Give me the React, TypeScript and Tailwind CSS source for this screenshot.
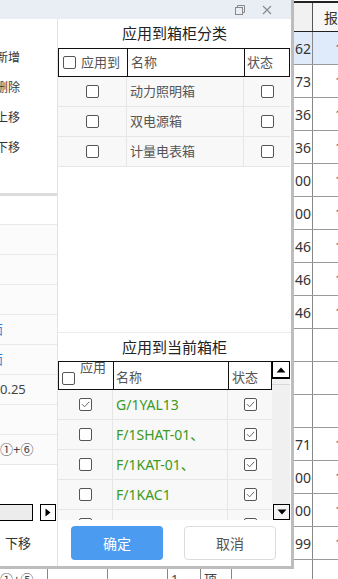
import React from "react";

const FONT = "font-['Noto_Sans','Noto_Sans_CJK_SC',sans-serif]";

function Box({ checked }: { checked?: boolean }) {
  return (
    <span className="inline-flex w-[13px] h-[13px] border border-[#555] rounded-[2px] bg-white items-center justify-center">
      {checked && (
        <svg width="9" height="9" viewBox="0 0 9 9">
          <path d="M1 4.2 L3.6 6.8 L8.2 1.8" fill="none" stroke="#666" strokeWidth="1" />
        </svg>
      )}
    </span>
  );
}

const categories = ["动力照明箱", "双电源箱", "计量电表箱"];

const current = [
  { name: "G/1YAL13", applied: true },
  { name: "F/1SHAT-01、", applied: false },
  { name: "F/1KAT-01、", applied: false },
  { name: "F/1KAC1", applied: false },
  { name: "F/1KAC2", applied: false },
];

const bgRows = ["62", "73", "36", "36", "00", "00", "46", "46", "46", "", "", "", "71", "00", "00", "99", ""];

function LeftPanel() {
  return (
    <div className="w-[58px] shrink-0 flex flex-col border-r border-[#e3e3e3] text-[12px] text-[#333]">
      <div className="h-[24px]" />
      {["新增", "删除", "上移", "下移"].map((t) => (
        <div key={t} className="h-[30px] w-[20px] overflow-hidden flex items-center justify-end whitespace-nowrap">
          {t}
        </div>
      ))}
      <div className="h-[30px]" />
      <div className="h-[3px] bg-[#dcdcdc]" />
      <div className="h-[29px] border-b border-[#e8e8e8]" />
      {["", "", "", "面", "面", "0.25", "", "①+⑥"].map((t, i) => (
        <div
          key={i}
          className={`h-[30px] border-b border-[#e8e8e8] bg-[#fbfbfb] flex items-center overflow-hidden whitespace-nowrap text-[13px] ${
            t === "面" ? "text-[#3d7fd6] -ml-[10px]" : "text-[#444]"
          }`}
        >
          {t}
        </div>
      ))}
      <div className="h-[39px]" />
      <div className="h-[17px] flex items-stretch">
        <div className="w-[34px] -ml-[1px] border border-black bg-[#ececec]" />
        <div className="w-[16px] ml-[7px] border border-black bg-white flex items-center justify-center">
          <svg width="6" height="9" viewBox="0 0 6 9">
            <path d="M0.5 0.5 L5.5 4.5 L0.5 8.5 Z" fill="#000" />
          </svg>
        </div>
      </div>
      <div className="h-[14px]" />
      <div className="h-[18px] pl-[5px] flex items-center text-[13px] text-[#333]">下移</div>
    </div>
  );
}

function CategoryTable() {
  return (
    <div className="w-[232px]">
      <div className="h-[29px] border border-[#111] flex items-stretch text-[13px] text-[#555] bg-white">
        <div className="w-[69px] flex items-center pl-[4px] gap-[5px] border-r border-[#111]">
          <Box />
          <span>应用到</span>
        </div>
        <div className="w-[117px] flex items-center pl-[3px] border-r border-[#111]">名称</div>
        <div className="flex-1 flex items-center pl-[2px]">状态</div>
      </div>
      {categories.map((c) => (
        <div key={c} className="h-[30px] border-b border-[#e6e6e6] bg-[#f8f8f8] flex items-stretch text-[13px] text-[#555]">
          <div className="w-[69px] flex items-center justify-center border-r border-[#e6e6e6]">
            <Box />
          </div>
          <div className="w-[117px] flex items-center pl-[3px] border-r border-[#e6e6e6]">{c}</div>
          <div className="flex-1 flex items-center justify-center">
            <Box />
          </div>
        </div>
      ))}
    </div>
  );
}

function CurrentTable() {
  return (
    <div className="h-[159px] w-[232px] flex overflow-hidden">
      <div className="w-[214px] overflow-hidden">
        <div className="h-[29px] border border-[#111] flex items-stretch text-[13px] text-[#555] bg-white">
          <div className="w-[55px] flex items-end pb-[4px] pl-[3px] border-r border-[#111] relative">
            <Box />
            <span className="absolute left-[21px] top-[-3px] leading-[16px]">应用</span>
          </div>
          <div className="w-[115px] flex items-end pb-[2px] pl-[2px] border-r border-[#111]">名称</div>
          <div className="flex-1 flex items-end pb-[2px] pl-[3px]">状态</div>
        </div>
        {current.map((r) => (
          <div key={r.name} className="h-[30px] border-b border-[#e6e6e6] bg-[#f8f8f8] flex items-stretch">
            <div className="w-[55px] flex items-center justify-center border-r border-[#e6e6e6]">
              <Box checked={r.applied} />
            </div>
            <div className="w-[115px] flex items-center pl-[3px] border-r border-[#e6e6e6] text-[14px] text-[#3a9a22] whitespace-nowrap overflow-hidden">
              {r.name}
            </div>
            <div className="flex-1 flex items-center justify-center">
              <Box checked />
            </div>
          </div>
        ))}
      </div>
      <div className="w-[18px] flex flex-col">
        <div className="h-[18px] border border-black border-b-[2px] bg-white flex items-center justify-center">
          <svg width="10" height="6" viewBox="0 0 10 6">
            <path d="M0.5 5.5 L5 0.5 L9.5 5.5 Z" fill="#000" />
          </svg>
        </div>
        <div className="h-[6px] bg-[#f2f2f2] border-b border-[#d8d8d8]" />
        <div className="flex-1 bg-[#f0f0f0]" />
        <div className="h-[16px] ml-[1px] border border-black bg-[#f4f4f4] flex items-center justify-center">
          <svg width="10" height="6" viewBox="0 0 10 6">
            <path d="M0.5 0.5 L9.5 0.5 L5 5.5 Z" fill="#000" />
          </svg>
        </div>
      </div>
    </div>
  );
}

function Window() {
  return (
    <div className="h-[569px] flex flex-col border-r-[3px] border-b-[3px] border-[#bdbdbd] bg-white">
      <div className="h-[19px] bg-[#e9eef5] flex items-center justify-end pr-[19px] gap-[17px] shrink-0">
        <svg width="10" height="10" viewBox="0 0 10 10">
          <rect x="0.5" y="2.5" width="7" height="7" fill="none" stroke="#888" />
          <path d="M2.5 2.5 V0.5 H9.5 V7.5 H7.5" fill="none" stroke="#888" />
        </svg>
        <svg width="10" height="10" viewBox="0 0 10 10">
          <path d="M1 1 L9 9 M9 1 L1 9" stroke="#888" strokeWidth="1.1" />
        </svg>
      </div>
      <div className="flex flex-1">
        <LeftPanel />
        <div className="flex-1 flex flex-col">
          <div className="h-[29px] flex items-center justify-center text-[15px] text-[#222]">应用到箱柜分类</div>
          <CategoryTable />
          <div className="h-[166px] border-b border-[#ececec]" />
          <div className="h-[28px] flex items-center justify-center text-[15px] text-[#222]">应用到当前箱柜</div>
          <CurrentTable />
          <div className="flex pt-[6px] pl-[13px] gap-[21px]">
            <button className="w-[92px] h-[34px] rounded-[4px] bg-[#4b9bf1] text-white text-[14px]">确定</button>
            <button className="w-[92px] h-[34px] rounded-[4px] border border-[#dcdcdc] bg-white text-[#555] text-[14px]">取消</button>
          </div>
        </div>
      </div>
    </div>
  );
}

function BottomStrip() {
  return (
    <div className="h-[10px] overflow-hidden flex text-[13px] text-[#444] leading-[18px]">
      <div className="w-[48px] border-r border-[#888] pt-[1px] whitespace-nowrap">①+⑤</div>
      <div className="w-[60px] border-r border-[#888]" />
      <div className="w-[60px] border-r border-[#888]" />
      <div className="w-[33px] border-r border-[#888] pt-[1px] pl-[3px]">1</div>
      <div className="w-[31px] border-r border-[#888] pt-[1px] pl-[3px]">项</div>
      <div className="flex-1" />
    </div>
  );
}

function RightTable() {
  return (
    <div className="w-[44px] min-w-0 flex flex-col overflow-hidden text-[14px] text-[#333]">
      <div className="h-[1px] bg-white shrink-0" />
      <div className="h-[31px] border-t-[2px] border-b border-[#222] flex shrink-0">
        <div className="w-[19px] shrink-0 bg-[#f1f1f1] border-r border-[#555]" />
        <div className="w-[25px] shrink-0 overflow-hidden bg-[#f7f7f7] flex items-center pl-[11px] whitespace-nowrap text-[#333]">报表</div>
      </div>
      {bgRows.map((v, i) => (
        <div
          key={i}
          className={`h-[33px] shrink-0 border-b border-[#999] flex ${i === 0 ? "bg-[#dfeafa]" : "bg-white"}`}
        >
          <div className="w-[19px] shrink-0 border-r border-[#888] flex items-center pl-[1px] overflow-hidden whitespace-nowrap">{v}</div>
          <div className="w-[25px] shrink-0 flex items-center pl-[22px] text-[#666] whitespace-nowrap overflow-hidden">
            {v ? "1" : ""}
          </div>
        </div>
      ))}
    </div>
  );
}

export default function App() {
  return (
    <div className={`flex w-[338px] h-[579px] overflow-hidden bg-white ${FONT}`}>
      <div className="flex flex-col w-[294px] shrink-0">
        <Window />
        <BottomStrip />
      </div>
      <RightTable />
    </div>
  );
}
